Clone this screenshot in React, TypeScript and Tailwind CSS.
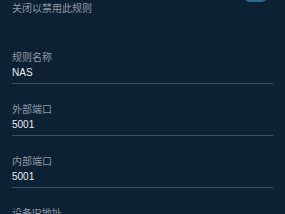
import React from 'react';

const fields = [
  { label: '规则名称', value: 'NAS' },
  { label: '外部端口', value: '5001' },
  { label: '内部端口', value: '5001' },
  { label: '设备IP地址', value: '192.168.1.10' },
];

export default function App() {
  return (
    <div
      className="h-[214px] w-[285px] overflow-hidden bg-[#0c2234] px-3"
      style={{ fontFamily: '"Liberation Sans", "Noto Sans CJK SC", sans-serif' }}
    >
      {/* bottom edge of the enable switch, scrolled off the top */}
      <div className="flex h-[2px] justify-end overflow-hidden">
        <div className="mr-[5px] -mt-[12px] h-[14px] w-[25px] rounded-full bg-[#2a6a8e]" />
      </div>
      <p className="text-[10px] leading-[14px] text-[#8c99a5]">关闭以禁用此规则</p>

      <div className="mt-[35px] flex flex-col gap-[19px]">
        {fields.map((f) => (
          <div key={f.label} className="border-b border-[#3b5060] pb-[3px]">
            <div className="text-[10px] leading-[14px] text-[#8c99a5]">{f.label}</div>
            <div className="mt-[1px] text-[10px] leading-[14px] text-[#e6ebf0]">{f.value}</div>
          </div>
        ))}
      </div>
    </div>
  );
}
